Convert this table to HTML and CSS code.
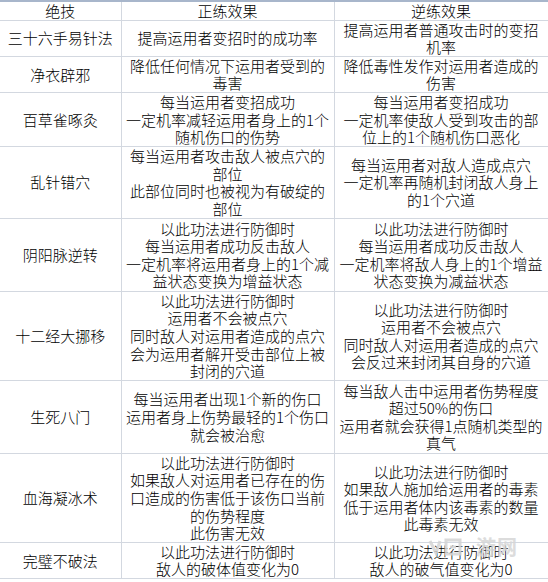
FILE: index.html
```html
<!DOCTYPE html>
<html lang="zh-CN">
<head>
<meta charset="utf-8">
<title>绝技</title>
<link rel="stylesheet" href="styles.css">
</head>
<body>
<div class="page">
<table class="skills">
  <colgroup>
    <col class="c1"><col class="c2"><col class="c3">
  </colgroup>
  <tr class="rh"><td>绝技</td><td>正练效果</td><td>逆练效果</td></tr>
  <tr class="r1"><td>三十六手易针法</td><td>提高运用者变招时的成功率</td><td>提高运用者普通攻击时的变招<br>机率</td></tr>
  <tr class="r2"><td>净衣辟邪</td><td>降低任何情况下运用者受到的<br>毒害</td><td>降低毒性发作对运用者造成的<br>伤害</td></tr>
  <tr class="r3"><td>百草雀啄灸</td><td>每当运用者变招成功<br>一定机率减轻运用者身上的1个<br>随机伤口的伤势</td><td>每当运用者变招成功<br>一定机率使敌人受到攻击的部<br>位上的1个随机伤口恶化</td></tr>
  <tr class="r4"><td>乱针错穴</td><td>每当运用者攻击敌人被点穴的<br>部位<br>此部位同时也被视为有破绽的<br>部位</td><td>每当运用者对敌人造成点穴<br>一定机率再随机封闭敌人身上<br>的1个穴道</td></tr>
  <tr class="r5"><td>阴阳脉逆转</td><td>以此功法进行防御时<br>每当运用者成功反击敌人<br>一定机率将运用者身上的1个减<br>益状态变换为增益状态</td><td>以此功法进行防御时<br>每当运用者成功反击敌人<br>一定机率将敌人身上的1个增益<br>状态变换为减益状态</td></tr>
  <tr class="r6"><td>十二经大挪移</td><td>以此功法进行防御时<br>运用者不会被点穴<br>同时敌人对运用者造成的点穴<br>会为运用者解开受击部位上被<br>封闭的穴道</td><td>以此功法进行防御时<br>运用者不会被点穴<br>同时敌人对运用者造成的点穴<br>会反过来封闭其自身的穴道</td></tr>
  <tr class="r7"><td>生死八门</td><td>每当运用者出现1个新的伤口<br>运用者身上伤势最轻的1个伤口<br>就会被治愈</td><td>每当敌人击中运用者伤势程度<br>超过50%的伤口<br>运用者就会获得1点随机类型的<br>真气</td></tr>
  <tr class="r8"><td>血海凝冰术</td><td>以此功法进行防御时<br>如果敌人对运用者已存在的伤<br>口造成的伤害低于该伤口当前<br>的伤势程度<br>此伤害无效</td><td>以此功法进行防御时<br>如果敌人施加给运用者的毒素<br>低于运用者体内该毒素的数量<br>此毒素无效</td></tr>
  <tr class="r9"><td>完璧不破法</td><td>以此功法进行防御时<br>敌人的破体值变化为0</td><td>以此功法进行防御时<br>敌人的破气值变化为0</td></tr>
</table>
<div class="watermark">
  <svg class="wm-icon" width="44" height="20" viewBox="0 0 44 20">
    <path d="M2 4 L8 16 L12 4" fill="none" stroke="#d4d4d4" stroke-width="3"/>
    <rect x="18" y="3" width="14" height="14" fill="none" stroke="#d4d4d4" stroke-width="3"/>
    <path d="M22 10 H28" stroke="#d4d4d4" stroke-width="3"/>
  </svg>
  <span class="wm-text">游网</span>
</div>
</div>
</body>
</html>
```
FILE: styles.css
```css
html, body {
  margin: 0;
  padding: 0;
  background: #ffffff;
}
.page {
  position: relative;
  width: 548px;
  height: 582px;
  overflow: hidden;
}
.skills {
  border-collapse: collapse;
  table-layout: fixed;
  width: 548px;
  font-family: "Noto Sans CJK SC", "Noto Sans", sans-serif;
  font-weight: 300;
  font-size: 15px;
  line-height: 17.6px;
  color: #000;
  border-top: 2px solid #a8b6cb;
}
.c1 { width: 121px; }
.c2 { width: 213px; }
.c3 { width: 214px; }
.skills td {
  border: 1px solid #d3d8e0;
  padding: 0;
  text-align: center;
  vertical-align: middle;
  white-space: nowrap;
  overflow: hidden;
}
.skills tr td:first-child { border-left: none; }
.skills tr:first-child td { border-top: 2px solid #a8b6cb; }
.rh { height: 19px; }
.r1 { height: 35px; }
.r2 { height: 36px; }
.r3 { height: 53px; }
.r4 { height: 72px; }
.r5 { height: 73px; }
.r6 { height: 88px; }
.r7 { height: 73px; }
.r8 { height: 89px; }
.r9 { height: 36px; }
.watermark {
  position: absolute;
  left: 428px;
  top: 537px;
  display: flex;
  align-items: center;
  gap: 4px;
  opacity: 0.85;
  pointer-events: none;
}
.wm-text {
  font-family: "Noto Sans CJK SC", sans-serif;
  font-weight: 700;
  font-size: 20px;
  line-height: 20px;
  color: #d6d6d6;
  letter-spacing: 1px;
}
```
